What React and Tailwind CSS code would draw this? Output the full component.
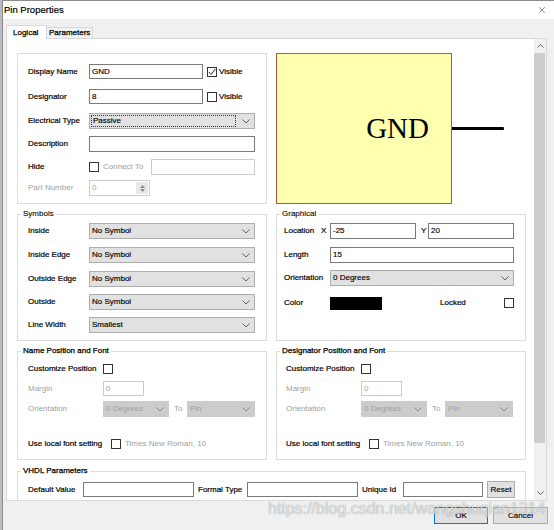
import { X } from "lucide-react";

// small drop-down arrow used on every combo box
const Chevron = ({ disabled }) => (
  <svg width="8" height="5" viewBox="0 0 8 5" className="shrink-0">
    <polyline points="0.5,0.5 4,4 7.5,0.5" fill="none" stroke={disabled ? "#8a8a8a" : "#606060"} strokeWidth="1" />
  </svg>
);

const Check = ({ checked }) => (
  <span className="w-[10px] h-[10px] border border-[#333333] bg-white shrink-0 flex items-center justify-center">
    {checked && (
      <svg width="8" height="8" viewBox="0 0 8 8">
        <polyline points="0.8,4 3,6.4 7.4,1" fill="none" stroke="#222222" strokeWidth="1" />
      </svg>
    )}
  </span>
);

const TextBox = ({ className, value, disabled }) => (
  <div
    className={`border bg-white px-[2px] text-[8px] leading-[13px] shrink-0 ${
      disabled ? "border-[#cccccc] text-[#a0a0a0]" : "border-[#7a7a7a] text-black [-webkit-text-stroke:0.15px_#000]"
    } ${className}`}
  >
    {value}
  </div>
);

const Combo = ({ className, value, disabled, focused }) => (
  <div
    className={`h-[16px] border flex items-center justify-between pr-[4px] text-[8px] shrink-0 ${
      disabled ? "bg-[#cccccc] border-[#cccccc] text-[#a0a0a0]" : "bg-[#e1e1e1] border-[#adadad] text-black [-webkit-text-stroke:0.15px_#000]"
    } ${className}`}
  >
    {focused ? (
      <span className="ml-[1px] flex-1 mr-[6px] h-[12px] border border-dotted border-[#333333] pl-[1px] leading-[10px]">{value}</span>
    ) : (
      <span className="pl-[2px]">{value}</span>
    )}
    <Chevron disabled={disabled} />
  </div>
);

const Label = ({ className, children, dim }) => (
  <span
    className={`shrink-0 text-[8px] whitespace-nowrap ${
      dim ? "text-[#a0a0a0]" : "text-black [-webkit-text-stroke:0.2px_#000]"
    } ${className}`}
  >
    {children}
  </span>
);

const Group = ({ title, className, strong, children }) => (
  <fieldset className={`border border-[#dcdcdc] shrink-0 ${className}`}>
    <legend
      className={`ml-[3px] px-[2px] text-[8px] leading-[10px] text-black ${
        strong ? "[-webkit-text-stroke:0.25px_#000]" : "[-webkit-text-stroke:0.1px_#000]"
      }`}
    >
      {title}
    </legend>
    {children}
  </fieldset>
);

const ScrollArrow = ({ up }) => (
  <div className="h-[14px] flex items-center justify-center">
    <svg width="7" height="4" viewBox="0 0 7 4">
      <polyline points={up ? "0.5,3.5 3.5,0.5 6.5,3.5" : "0.5,0.5 3.5,3.5 6.5,0.5"} fill="none" stroke="#606060" strokeWidth="1" />
    </svg>
  </div>
);

const PositionGroup = ({ title, pad }) => (
  <Group strong title={title} className="w-[250px] h-[114px]">
    <div className={`pt-[5px] ${pad}`}>
      <div className="flex items-center h-[16px]">
        <Label className="w-[75px]">Customize Position</Label>
        <Check />
      </div>
      <div className="flex items-center h-[15px] mt-[4px]">
        <Label dim className="w-[75px]">Margin</Label>
        <TextBox disabled value="0" className="w-[41px] h-[15px]" />
      </div>
      <div className="flex items-center h-[16px] mt-[5px]">
        <Label dim className="w-[75px]">Orientation</Label>
        <Combo disabled value="0 Degrees" className="w-[66px]" />
        <Label dim className="ml-[5px] w-[13px]">To</Label>
        <Combo disabled value="Pin" className="w-[68px]" />
      </div>
      <div className="flex items-center h-[16px] mt-[19px]">
        <Label className="w-[83px]">Use local font setting</Label>
        <Check />
        <Label dim className="ml-[4px]">Times New Roman, 10</Label>
      </div>
    </div>
  </Group>
);

export default function App() {
  return (
    <div className="relative w-[554px] h-[530px] flex bg-[#f0f0f0] overflow-hidden font-['Liberation_Sans',Arial,sans-serif]">
      <div className="w-[3px] shrink-0 bg-[#b9bdc3] border-r border-[#8c8c8c]" />

      <div className="flex-1 flex flex-col">
        {/* Title bar */}
        <div className="h-[19px] shrink-0 bg-white border-t border-[#8c8c8c] flex items-center justify-between pl-[1px] pr-[7px]">
          <span className="text-[9.5px] text-black [-webkit-text-stroke:0.2px_#000]">Pin Properties</span>
          <X size={10} strokeWidth={1.2} className="text-[#222222]" />
        </div>

        {/* Tabs */}
        <div className="h-[19px] shrink-0 flex items-end pl-[3px]">
          <div className="relative z-10 -mb-px w-[41px] h-[14px] pl-[6px] bg-white border border-b-0 border-[#d9d9d9] text-[8px] leading-[13px] text-black [-webkit-text-stroke:0.25px_#000]">
            Logical
          </div>
          <div className="w-[46px] h-[11px] pl-[2px] border border-l-0 border-b-0 border-[#d9d9d9] text-[8px] leading-[10px] text-black [-webkit-text-stroke:0.25px_#000]">
            Parameters
          </div>
        </div>

        {/* Tab page */}
        <div className="ml-[3px] w-[541px] h-[463px] shrink-0 border border-[#d9d9d9] bg-white flex overflow-hidden">
          <div className="flex-1 pl-[10px] pt-[14px] overflow-hidden">
            {/* Logical + preview */}
            <div className="flex gap-[9px]">
              <div className="w-[250px] h-[151px] shrink-0 border border-[#dcdcdc] pl-[10px] pt-[10px]">
                <div className="flex items-center h-[15px]">
                  <Label className="w-[61px]">Display Name</Label>
                  <TextBox value="GND" className="w-[114px] h-[15px]" />
                  <span className="ml-[4px]"><Check checked /></span>
                  <Label className="ml-[2px]">Visible</Label>
                </div>
                <div className="flex items-center h-[15px] mt-[10px]">
                  <Label className="w-[61px]">Designator</Label>
                  <TextBox value="8" className="w-[114px] h-[15px]" />
                  <span className="ml-[4px]"><Check /></span>
                  <Label className="ml-[2px]">Visible</Label>
                </div>
                <div className="flex items-center h-[16px] mt-[9px]">
                  <Label className="w-[61px]">Electrical Type</Label>
                  <Combo focused value="Passive" className="w-[166px]" />
                </div>
                <div className="flex items-center h-[16px] mt-[7px]">
                  <Label className="w-[61px]">Description</Label>
                  <TextBox value="" className="w-[166px] h-[16px]" />
                </div>
                <div className="flex items-center h-[16px] mt-[7px]">
                  <Label className="w-[61px]">Hide</Label>
                  <Check />
                  <Label dim className="ml-[4px] w-[48px]">Connect To</Label>
                  <TextBox disabled value="" className="w-[104px] h-[16px]" />
                </div>
                <div className="flex items-center h-[16px] mt-[5px]">
                  <Label dim className="w-[61px]">Part Number</Label>
                  <div className="w-[61px] h-[16px] border border-[#cccccc] bg-white flex items-stretch">
                    <span className="flex-1 pl-[2px] text-[8px] leading-[14px] text-[#a0a0a0]">0</span>
                    <div className="w-[12px] my-[1px] mr-[1px] bg-[#e8e8e8] flex flex-col items-center justify-center gap-[1px]">
                      <svg width="5" height="3" viewBox="0 0 5 3"><polygon points="0,3 2.5,0 5,3" fill="#8a8a8a" /></svg>
                      <svg width="5" height="3" viewBox="0 0 5 3"><polygon points="0,0 2.5,3 5,0" fill="#8a8a8a" /></svg>
                    </div>
                  </div>
                </div>
              </div>

              <div className="w-[250px] h-[151px] shrink-0 flex items-center">
                <div className="w-[176px] h-[151px] shrink-0 bg-[#ffffb0] border border-[#b5563c] flex items-center justify-end pr-[22px]">
                  <span className="font-['Liberation_Serif',serif] text-[29px] leading-none text-black">GND</span>
                </div>
                <div className="w-[52px] h-[3px] bg-black rounded-r-[1px]" />
              </div>
            </div>

            {/* Symbols + Graphical */}
            <div className="flex gap-[9px] mt-[5px]">
              <Group title="Symbols" className="w-[250px] h-[132px]">
                <div className="pl-[10px] pt-[4px]">
                  {[
                    ["Inside", "No Symbol", ""],
                    ["Inside Edge", "No Symbol", "mt-[8px]"],
                    ["Outside Edge", "No Symbol", "mt-[8px]"],
                    ["Outside", "No Symbol", "mt-[7px]"],
                    ["Line Width", "Smallest", "mt-[7px]"],
                  ].map(([label, value, mt]) => (
                    <div key={label} className={`flex items-center h-[16px] ${mt}`}>
                      <Label className="w-[61px]">{label}</Label>
                      <Combo value={value} className="w-[166px]" />
                    </div>
                  ))}
                </div>
              </Group>

              <Group title="Graphical" className="w-[250px] h-[132px]">
                <div className="pl-[7px] pt-[4px]">
                  <div className="flex items-center h-[16px]">
                    <Label className="w-[37px]">Location</Label>
                    <Label className="w-[9px]">X</Label>
                    <TextBox value="-25" className="w-[86px] h-[16px]" />
                    <Label className="ml-[5px] w-[7px]">Y</Label>
                    <TextBox value="20" className="w-[86px] h-[16px]" />
                  </div>
                  <div className="flex items-center h-[16px] mt-[8px]">
                    <Label className="w-[46px]">Length</Label>
                    <TextBox value="15" className="w-[184px] h-[16px]" />
                  </div>
                  <div className="flex items-center h-[16px] mt-[7px]">
                    <Label className="w-[46px]">Orientation</Label>
                    <Combo value="0 Degrees" className="w-[184px]" />
                  </div>
                  <div className="flex items-center h-[16px] mt-[9px]">
                    <Label className="w-[46px]">Color</Label>
                    <span className="w-[52px] h-[13px] bg-black shrink-0" />
                    <Label className="ml-[58px] w-[64px]">Locked</Label>
                    <Check />
                  </div>
                </div>
              </Group>
            </div>

            {/* Position and font */}
            <div className="flex gap-[9px] mt-[5px]">
              <PositionGroup title="Name Position and Font" pad="pl-[10px]" />
              <PositionGroup title="Designator Position and Font" pad="pl-[9px]" />
            </div>

            {/* VHDL */}
            <Group strong title="VHDL Parameters" className="w-[509px] h-[60px] mt-[6px]">
              <div className="pl-[10px] pt-[5px] flex items-center h-[22px]">
                <Label className="w-[55px]">Default Value</Label>
                <TextBox value="" className="w-[111px] h-[15px]" />
                <Label className="ml-[4px] w-[49px]">Formal Type</Label>
                <TextBox value="" className="w-[111px] h-[15px]" />
                <Label className="ml-[4px] w-[41px]">Unique Id</Label>
                <TextBox value="" className="w-[80px] h-[15px]" />
                <button className="ml-[4px] w-[28px] h-[17px] bg-[#e1e1e1] border border-[#adadad] text-[8px] text-black [-webkit-text-stroke:0.15px_#000]">Reset</button>
              </div>
            </Group>
          </div>

          {/* Scrollbar */}
          <div className="w-[12px] shrink-0 bg-[#f0f0f0] flex flex-col">
            <ScrollArrow up />
            <div className="h-[390px] w-[11px] bg-[#cdcdcd]" />
            <div className="flex-1" />
            <ScrollArrow />
          </div>
        </div>

        {/* Buttons */}
        <div className="flex justify-end gap-[5px] pt-[6px] pr-[6px]">
          <button className="w-[54px] h-[17px] bg-[#e1e1e1] border border-[#0078d7] text-[8px] text-black [-webkit-text-stroke:0.15px_#000]">OK</button>
          <button className="w-[55px] h-[17px] bg-[#e1e1e1] border border-[#adadad] text-[8px] text-black [-webkit-text-stroke:0.15px_#000]">Cancel</button>
        </div>
      </div>

      {/* blog watermark stamped over the capture */}
      <span className="absolute left-[268px] top-[500px] text-[16px] leading-[18px] text-white/70 [text-shadow:0_0_1px_rgba(0,0,0,0.45)] pointer-events-none">
        https://blog.csdn.net/wangshuqian1314
      </span>
    </div>
  );
}
